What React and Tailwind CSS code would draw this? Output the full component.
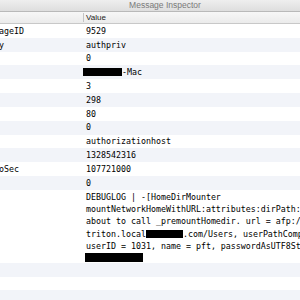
import React from "react";

const rows = [
  { k: "ASLMessageID", v: "9529" },
  { k: "Facility", v: "authpriv" },
  { k: "GID", v: "0" },
  { k: "Host", v: "MAC" },
  { k: "Level", v: "3" },
  { k: "PID", v: "298" },
  { k: "ReadGID", v: "80" },
  { k: "ReadUID", v: "0" },
  { k: "Sender", v: "authorizationhost" },
  { k: "Time", v: "1328542316" },
  { k: "TimeNanoSec", v: "107721000" },
  { k: "UID", v: "0" },
];

function Value({ v }) {
  if (v === "MAC") {
    return (
      <span className="flex items-center">
        <span className="inline-block w-[39px] h-[8px] bg-black -ml-[3px]"></span>
        <span>-Mac</span>
      </span>
    );
  }
  return <span>{v}</span>;
}

export default function App() {
  const mono = { fontFamily: '"DejaVu Sans Mono", "Liberation Mono", monospace' };
  return (
    <div className="w-[300px] h-[300px] overflow-hidden bg-white flex flex-col text-black">
      <div className="h-[12px] shrink-0 bg-gradient-to-b from-[#eeeeee] to-[#dedede] border-b border-[#b9b9b9] flex items-center justify-center pl-[30px]">
        <span className="text-[8.5px] text-[#7a7a7a] leading-none" style={{ fontFamily: '"Liberation Sans", Arial, sans-serif' }}>
          Message Inspector
        </span>
      </div>
      <div className="h-[12px] shrink-0 bg-gradient-to-b from-[#f7f7f7] to-[#ebebeb] border-b border-[#c8c8c8] flex">
        <div className="w-[84px] shrink-0 border-r border-[#c4c4c4] my-[1px]"></div>
        <div className="pl-[2px] flex items-center text-[8px] text-[#222] leading-none" style={{ fontFamily: '"Liberation Sans", Arial, sans-serif' }}>
          Value
        </div>
      </div>
      <div className="flex flex-col text-[8.3px]" style={mono}>
        {rows.map((r, i) => (
          <div key={i} className={"h-[13.83px] shrink-0 flex items-center " + (i % 2 ? "bg-[#f2f4f9]" : "bg-white")}>
            <div className="w-[83px] shrink-0 overflow-hidden whitespace-nowrap">
              <span className="inline-block -ml-[36px]">{r.k}</span>
            </div>
            <div className="pl-[3px] whitespace-nowrap">
              <Value v={r.v} />
            </div>
          </div>
        ))}
        <div className="h-[73.3px] shrink-0 flex bg-white">
          <div className="w-[83px] shrink-0 overflow-hidden whitespace-nowrap pt-[1px] leading-[12.2px]">
            <span className="inline-block -ml-[36px]">Message</span>
          </div>
          <div className="pl-[3px] pt-[1px] flex flex-col leading-[12.2px] whitespace-nowrap">
            <span>DEBUGLOG | -[HomeDirMounter</span>
            <span>mountNetworkHomeWithURL:attributes:dirPath:username:</span>
            <span>about to call _premountHomedir. url = afp://</span>
            <span className="flex items-center">
              <span>triton.local</span>
              <span className="inline-block w-[37px] h-[8px] bg-black"></span>
              <span>.com/Users, userPathComponents</span>
            </span>
            <span>userID = 1031, name = pft, passwordAsUTF8String</span>
            <span className="flex items-center h-[12.2px]">
              <span className="inline-block w-[58px] h-[8.5px] bg-black -ml-[1px]"></span>
            </span>
          </div>
        </div>
        <div className="h-[13.4px] shrink-0 bg-[#f2f4f9]"></div>
        <div className="h-[13.4px] shrink-0 bg-white"></div>
        <div className="h-[13.4px] shrink-0 bg-[#f2f4f9]"></div>
      </div>
    </div>
  );
}
